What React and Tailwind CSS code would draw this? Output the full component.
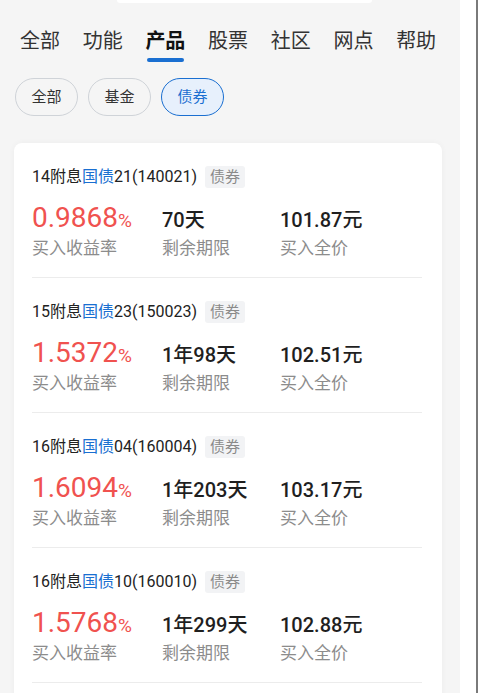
import React from "react";

const tabs = ["全部", "功能", "产品", "股票", "社区", "网点", "帮助"];
const chips = ["全部", "基金", "债券"];

const bonds = [
  { year: "14", no: "21", code: "140021", rate: "0.9868", term: "70天", price: "101.87元" },
  { year: "15", no: "23", code: "150023", rate: "1.5372", term: "1年98天", price: "102.51元" },
  { year: "16", no: "04", code: "160004", rate: "1.6094", term: "1年203天", price: "103.17元" },
  { year: "16", no: "10", code: "160010", rate: "1.5768", term: "1年299天", price: "102.88元" },
];

const BondRow = ({ bond }) => (
  <div className="pt-[23px] pb-[18px] border-b border-[#ececec]">
    {/* Title */}
    <div className="flex items-center h-[22px]">
      <span className="text-[16px] text-[#222]">
        {bond.year}附息<span className="text-[#1a6fd1]">国债</span>
        {bond.no}({bond.code})
      </span>
      <span className="ml-[8px] h-[22px] px-[5px] flex items-center rounded-[3px] bg-[#f2f3f5] text-[15px] text-[#8a8a8a]">
        债券
      </span>
    </div>

    {/* Values */}
    <div className="flex items-baseline h-[28px] leading-[28px] mt-[16px]">
      <div className="w-[130px] text-[#f0524f] whitespace-nowrap">
        <span className="text-[28px]">{bond.rate}</span>
        <span className="text-[19px]">%</span>
      </div>
      <div className="w-[118px] text-[20px] font-medium text-[#1f1f1f]">{bond.term}</div>
      <div className="text-[20px] font-medium text-[#1f1f1f]">{bond.price}</div>
    </div>

    {/* Labels */}
    <div className="flex h-[22px] leading-[22px] mt-[5px] text-[17px] text-[#8c8c8c]">
      <div className="w-[130px]">买入收益率</div>
      <div className="w-[118px]">剩余期限</div>
      <div>买入全价</div>
    </div>
  </div>
);

const App = () => {
  return (
    <div
      className="flex w-[478px] h-[693px] overflow-hidden bg-white"
      style={{ fontFamily: 'Roboto, "Noto Sans CJK SC", sans-serif' }}
    >
      {/* Main column */}
      <div className="w-[460px] bg-[#f5f5f5]">
        {/* bottom edge of search box scrolled off */}
        <div className="ml-[117px] w-[255px] h-[3px] bg-white rounded-b-[3px]" />

        {/* Tabs */}
        <div className="flex pl-[20px] gap-[22.7px] mt-[24px]">
          {tabs.map((t) => (
            <div key={t} className="flex flex-col items-center w-[40px]">
              <div
                className={
                  t === "产品"
                    ? "text-[20px] leading-[28px] font-semibold text-[#111] whitespace-nowrap"
                    : "text-[20px] leading-[28px] text-[#333] whitespace-nowrap"
                }
              >
                {t}
              </div>
              {t === "产品" ? (
                <div className="mt-[3px] w-[37px] h-[4px] rounded-full bg-[#1a6fd1]" />
              ) : (
                <div className="mt-[3px] h-[4px]" />
              )}
            </div>
          ))}
        </div>

        {/* Filter chips */}
        <div className="flex gap-[10px] pl-[15px] mt-[16px]">
          {chips.map((c) => (
            <div
              key={c}
              className={
                c === "债券"
                  ? "w-[63px] h-[38px] rounded-full border-[1.5px] border-[#1a6fd1] bg-[#e7f0fc] text-[#1a6fd1] text-[15px] flex items-center justify-center"
                  : "w-[63px] h-[38px] rounded-full border border-[#cfd3d8] text-[#333] text-[15px] flex items-center justify-center"
              }
            >
              {c}
            </div>
          ))}
        </div>

        {/* Bond list card */}
        <div className="ml-[14px] mt-[27px] w-[428px] bg-white rounded-[8px] pl-[18px] pr-[20px] shadow-[0_0_6px_rgba(0,0,0,0.04)]">
          {bonds.map((b) => (
            <BondRow key={b.code} bond={b} />
          ))}
          <div className="h-[40px]" />
        </div>
      </div>

      {/* Scrollbar strip */}
      <div className="w-[16px] bg-white" />
      <div className="w-[2px] bg-[#7a7a7a]" />
    </div>
  );
};

export default App;
